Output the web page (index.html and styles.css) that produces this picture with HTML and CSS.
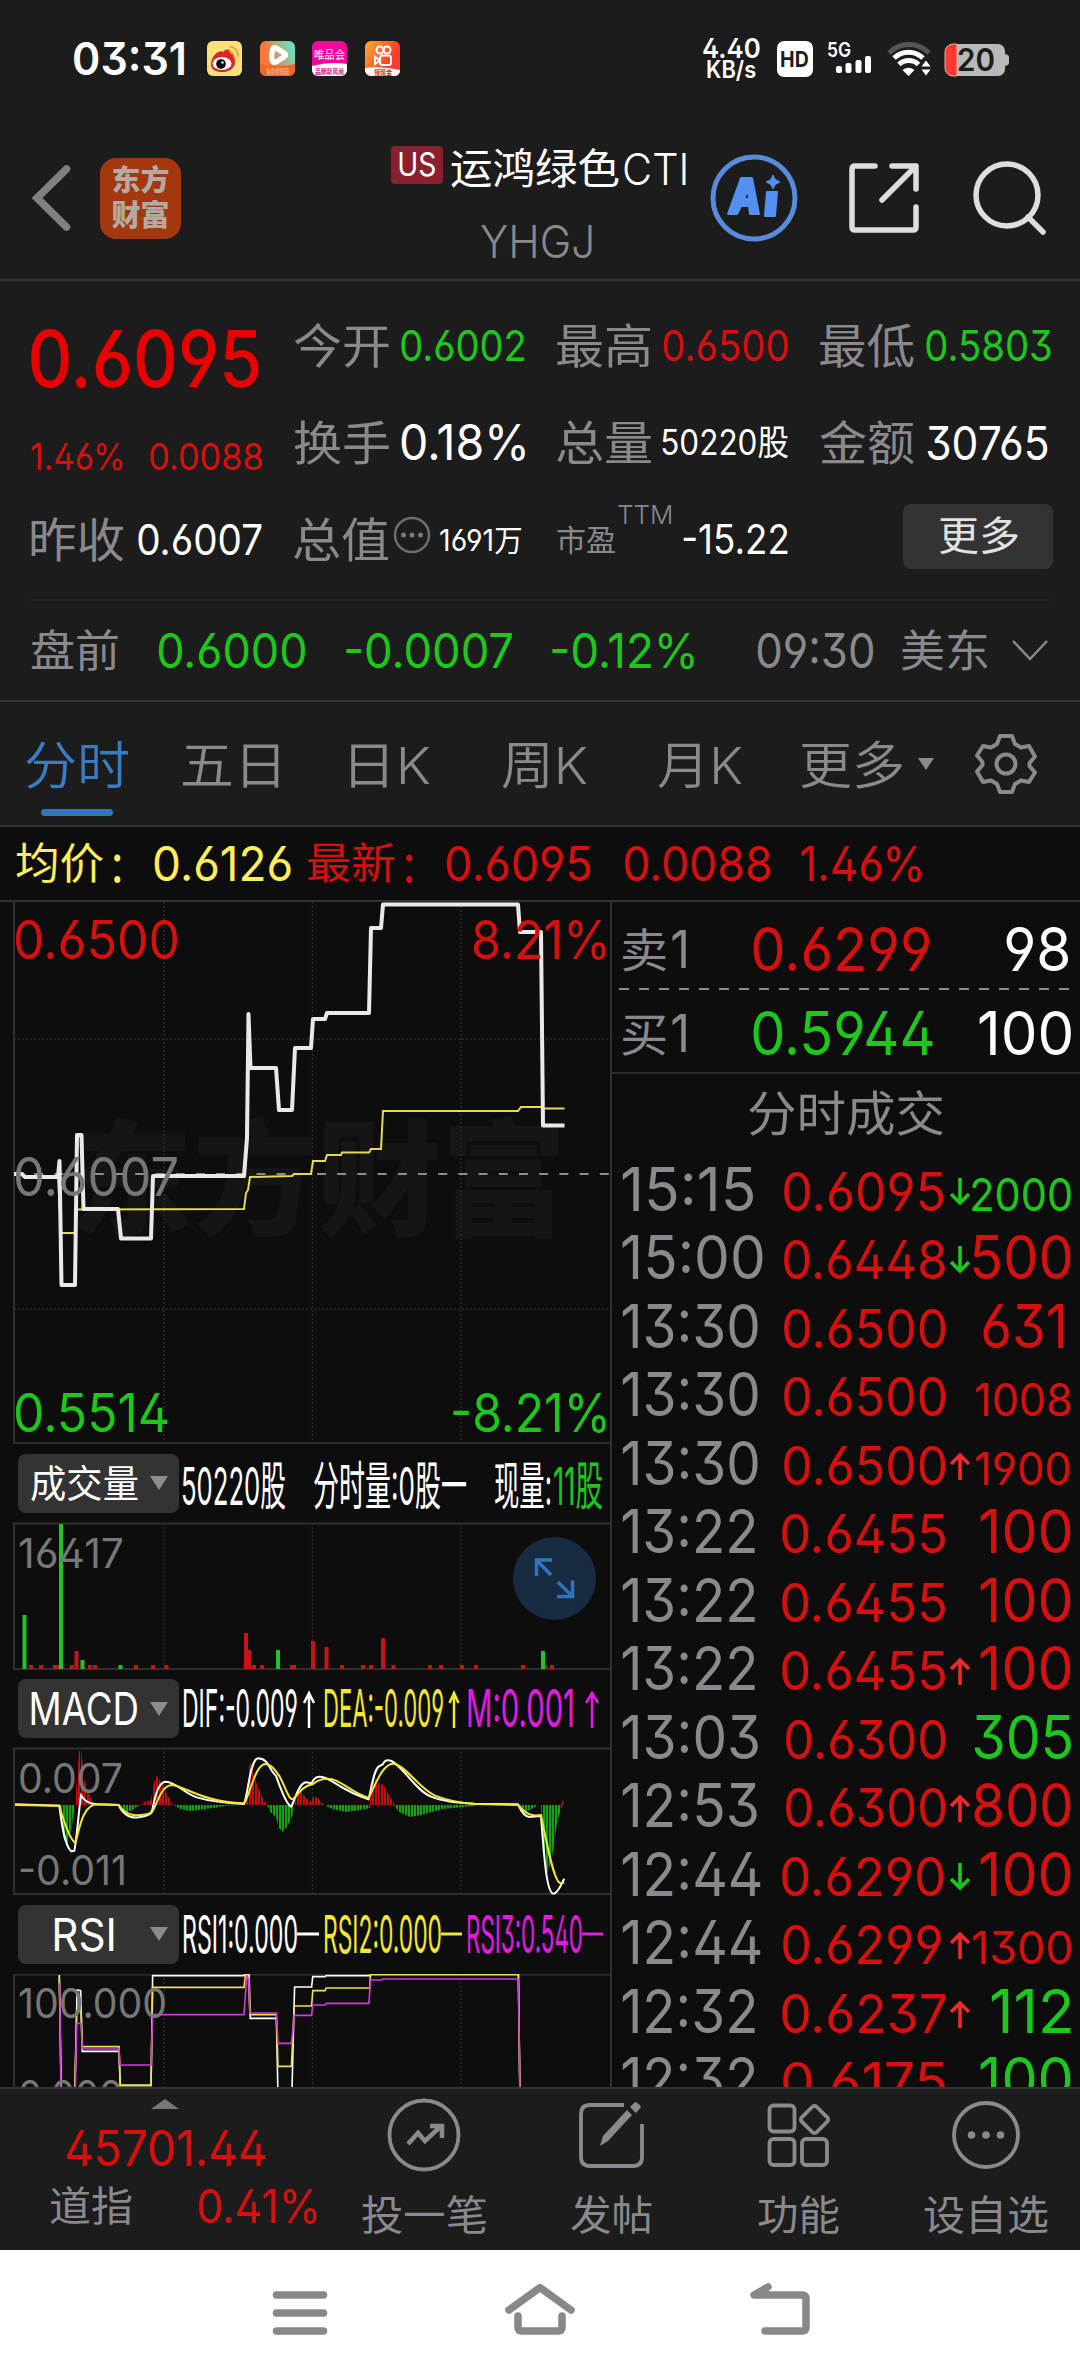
FILE: index.html
```html
<!DOCTYPE html>
<html lang="zh-CN">
<head>
<meta charset="utf-8">
<title>运鸿绿色CTI YHGJ</title>
<link rel="stylesheet" href="styles.css">
</head>
<body>
<svg class="defs"><symbol id="dn" viewBox="0 0 20 28"><path d="M10 0v25M1 16l9 9 9-9" fill="none" stroke="currentColor" stroke-width="3.600"/></symbol><symbol id="upa" viewBox="0 0 20 28"><path d="M10 28V3M1 12l9-9 9 9" fill="none" stroke="currentColor" stroke-width="3.600"/></symbol></svg>
<div class="phone">
  <header class="status">
    <span class="clock fit" data-w="110">03:31</span>
    <div class="apps">
      <svg class="app" viewBox="0 0 35 35"><rect width="35" height="35" rx="6" fill="#fddf7c"/><path d="M4 24C4 14 13 8 16 11c3-4 9-3 8 2 5 1 3 5 4 7 1 14-24 14-24 4z" fill="#e0242b"/><ellipse cx="15" cy="22.500" rx="9.500" ry="6.500" fill="#fff"/><circle cx="14" cy="23" r="4.800" fill="#000"/><circle cx="15.500" cy="21.500" r="1.300" fill="#fff"/><path d="M22 10a6 6 0 0 1 5 7M23 5.500a9 9 0 0 1 8 10" fill="none" stroke="#e8a72c" stroke-width="1.800"/></svg>
      <svg class="app" viewBox="0 0 35 35"><defs><linearGradient id="ga" x1="0" y1=".6" x2="1" y2=".2"><stop offset=".3" stop-color="#f47b3c"/><stop offset=".9" stop-color="#6fdcc0"/></linearGradient></defs><rect width="35" height="35" rx="6" fill="url(#ga)"/><path d="M0 23q18 4 35 0v6a6 6 0 0 1-6 6H6a6 6 0 0 1-6-6z" fill="#f4652a"/><path d="M13 8q0-2 3-1l8 5q3 2 0 4l-8 5q-3 1-4-2-1-5 1-11z" fill="none" stroke="#fff" stroke-width="5.500" stroke-linejoin="round"/><text class="mini" x="6" y="33" textLength="23" fill="#ffc9a5">免费看短剧</text></svg>
      <svg class="app" viewBox="0 0 35 35"><rect width="35" height="35" rx="6" fill="#f10a9a"/><path d="M0 25q18-5 35-2v6a6 6 0 0 1-6 6H6a6 6 0 0 1-6-6z" fill="#fff"/><text class="vip" x="2" y="18" textLength="31">唯品会</text><text class="mini strong" x="3" y="32.500" textLength="29" fill="#e5118f">品牌新风尚</text></svg>
      <svg class="app" viewBox="0 0 35 35"><defs><linearGradient id="gb" x1="0" y1="0" x2="1" y2=".6"><stop offset="0" stop-color="#fdb02c"/><stop offset=".8" stop-color="#fb3b2e"/></linearGradient></defs><rect width="35" height="35" rx="6" fill="url(#gb)"/><path d="M0 27q18-2 35 2 0 6-6 6H6a6 6 0 0 1-6-6z" fill="#fff"/><g fill="none" stroke="#fff" stroke-width="2"><circle cx="15" cy="9" r="3.500"/><circle cx="22" cy="9" r="3.500"/><rect x="15" y="14.500" width="11" height="9.500" rx="2.500"/><path d="M10 16v7l5-3.500z"/></g><text class="mini strong" x="9" y="34" textLength="18" fill="#d8241b">领现金</text></svg>
    </div>
    <div class="speed"><span class="fit" data-w="57">4.40</span><span class="fit unit" data-w="49">KB/s</span></div>
    <div class="hd"><span class="fit" data-w="27">HD</span></div>
    <svg class="sig" viewBox="0 0 46 36"><text class="g5" x="0" y="16" textLength="24" lengthAdjust="spacingAndGlyphs">5G</text><g fill="#fff"><rect x="9" y="25" width="6" height="7" rx="2"/><rect x="18.500" y="22" width="6" height="10" rx="2"/><rect x="28.500" y="19" width="6" height="13" rx="2"/><rect x="38" y="15" width="6" height="17" rx="2"/></g></svg>
    <svg class="wifi" viewBox="0 0 44 36"><g fill="none" stroke-width="5"><path d="M2 12a28 28 0 0 1 40 0" stroke="#555"/><path d="M7 17a21 21 0 0 1 29 0M12 23.500a14 14 0 0 1 19.500 0" stroke="#fff"/></g><path d="M15.500 29q6-4.500 12 0l-6 6z" fill="#fff"/><path d="M34.500 25.500l4.500-6 4.500 6zM34.500 28.500l4.500 6 4.500-6z" fill="#fff"/></svg>
    <svg class="battery" viewBox="0 0 66 34"><path d="M9 1h45a7 7 0 0 1 7 7v3q4 1 4 3v6q0 2-4 3v3a7 7 0 0 1-7 7H9z" fill="#b9b9b9"/><path d="M13 1v32H9a8 8 0 0 1-8-8V9a8 8 0 0 1 8-8z" fill="#fb3a2d" stroke="#d8b0ac" stroke-width="1"/><text class="pct" x="13" y="28" textLength="38" lengthAdjust="spacingAndGlyphs">20</text></svg>
  </header>

  <nav class="top">
    <svg class="back" viewBox="0 0 38 66"><path d="M34.500 4L5 33l29.500 29" fill="none" stroke="#808080" stroke-width="7.500" stroke-linecap="round"/></svg>
    <div class="logo"><span>东方</span><span>财富</span></div>
    <div class="title">
      <div class="name"><span class="us"><span class="fit" data-w="36">US</span></span><span class="fit cn" data-w="168">运鸿绿色</span><span class="fit lat" data-w="62">CTI</span></div>
      <span class="fit code" data-w="111">YHGJ</span>
    </div>
    <svg class="ai" viewBox="0 0 88 90"><circle cx="44" cy="45" r="41" fill="none" stroke="#588bdc" stroke-width="5"/><g fill="#5490f2" stroke="#5490f2" stroke-width="2" stroke-linejoin="round"><path fill-rule="evenodd" d="M31 25h11l7 36h-9l-1-8h-8l-4 8h-9zM38 36l-4 10h5z"/><path d="M57 39h10l-2 24h-10z"/><path d="M63 23q1 5 6 6-5 1-6 6-1-5-6-6 5-1 6-6z"/></g></svg>
    <svg class="share" viewBox="0 0 70 70"><path d="M26 3H6Q3 3 3 6v58q0 3 3 3h58q3 0 3-3V44M43 3h24v23M67 3L33 37" fill="none" stroke="#dedede" stroke-width="5.500" stroke-linecap="round" stroke-linejoin="round"/></svg>
    <svg class="search" viewBox="0 0 74 76"><circle cx="35" cy="35" r="31" fill="none" stroke="#dedede" stroke-width="5.500"/><path d="M56 57l15 15" stroke="#dedede" stroke-width="5.500" stroke-linecap="round"/></svg>
  </nav>

  <section class="quote">
    <div class="cell low up big"><span class="fit" data-w="231">0.6095</span></div>
    <div class="cell"><span class="lb fit" data-w="95">今开</span><span class="fit n42 down" data-w="124">0.6002</span></div>
    <div class="cell"><span class="lb fit" data-w="94">最高</span><span class="fit n42 up" data-w="125">0.6500</span></div>
    <div class="cell"><span class="lb fit" data-w="94">最低</span><span class="fit n42 down" data-w="125">0.5803</span></div>
    <div class="cell low up"><span class="fit n37" data-w="94">1.46%</span><span class="fit n37" data-w="112">0.0088</span></div>
    <div class="cell"><span class="lb fit" data-w="95">换手</span><span class="fit n49" data-w="124">0.18%</span></div>
    <div class="cell"><span class="lb fit" data-w="94">总量</span><span class="fit n35" data-w="126">50220股</span></div>
    <div class="cell"><span class="lb fit" data-w="94">金额</span><span class="fit n47" data-w="124">30765</span></div>
    <div class="cell"><span class="lb fit" data-w="93">昨收</span><span class="fit n42" data-w="124">0.6007</span></div>
    <div class="cell"><span class="lb fit" data-w="95">总值</span><svg class="dots" viewBox="0 0 38 38"><circle cx="19" cy="19" r="17" fill="none" stroke="#6d6d6f" stroke-width="2.500"/><g fill="#7a7a7c"><circle cx="10.500" cy="19" r="2.500"/><circle cx="19" cy="19" r="2.500"/><circle cx="27.500" cy="19" r="2.500"/></g></svg><span class="fit n30" data-w="85">1691万</span></div>
    <div class="cell"><span class="lb sm fit" data-w="58">市盈</span><span class="fit ttm" data-w="53">TTM</span><span class="fit n41 last" data-w="105">-15.22</span></div>
    <div class="cell end"><span class="more"><span class="fit" data-w="79">更多</span></span></div>
  </section>

  <section class="pre">
    <span class="fit t44" data-w="87">盘前</span><span class="fit v down" data-w="148">0.6000</span><span class="fit v down" data-w="166">-0.0007</span><span class="fit v down" data-w="142">-0.12%</span><span class="fit v tm" data-w="118">09:30</span><span class="fit t44" data-w="87">美东</span>
    <svg class="chev" viewBox="0 0 36 22"><path d="M1 1l17 18L35 1" fill="none" stroke="#8a898e" stroke-width="2.500"/></svg>
  </section>

  <nav class="tabs">
    <span class="tab on"><span class="fit" data-w="102">分时</span></span>
    <span class="tab"><span class="fit" data-w="97">五日</span></span>
    <span class="tab"><span class="fit" data-w="79">日K</span></span>
    <span class="tab"><span class="fit" data-w="85">周K</span></span>
    <span class="tab"><span class="fit" data-w="84">月K</span></span>
    <span class="tab"><span class="fit" data-w="102">更多</span></span>
    <svg class="tri" viewBox="0 0 16 14"><path d="M0 1h16L8 13z" fill="#8a898e"/></svg>
    <svg class="gear" viewBox="0 0 62 62"><g fill="none" stroke="#8a898e" stroke-width="4" stroke-linejoin="round"><path d="M25 3h12l3 8 6 3.500 8-1.500 6 10.500-5.500 6.500v3l5.500 6.500L54 49l-8-1.500-6 3.500-3 8H25l-3-8-6-3.500L8 49 2 38.500 7.500 32v-3L2 22.500 8 13l8 1.500 6-3.500z"/><circle cx="31" cy="31" r="9.500"/></g></svg>
  </nav>

  <section class="info">
    <span class="fit i43 yel" data-w="87">均价</span><span class="fit i43 c1 yel" data-w="7">:</span><span class="fit i48 yel" data-w="139">0.6126</span>
    <span class="fit i43 up a" data-w="87">最新</span><span class="fit i43 c1 up" data-w="7">:</span><span class="fit i48 up" data-w="147">0.6095</span><span class="fit i48 up b" data-w="146">0.0088</span><span class="fit i48 up b" data-w="123">1.46%</span>
  </section>

  <main class="board">
    <div class="charts">
      <svg class="price" viewBox="0 902 612 542">
        <g class="wm"><text x="68" y="1226" textLength="498">东方财富</text></g>
        <path class="grid" d="M164 902v542M312.500 902v542M461 902v542M14 1039h597M14 1309h597"/>
        <path class="edge" d="M14 902v541h597"/>
        <path d="M14 1174h597" stroke="#8d8d8d" stroke-width="2" stroke-dasharray="9 11.200" fill="none"/>
        <path class="avg" d="M14 1174H22L25 1177H58L61 1233H75L77 1209.500L244 1209L246 1193L248 1190L250 1177L292 1176L294 1174H311L313 1161H325L327 1155H341L342 1152.500H369L371 1149H381L383 1111H518L521 1107H541L543 1108.500H564.500"/>
        <path class="now" d="M14 1174H22L25 1177H58L59.500 1161L61.500 1285H75L77 1135H81.500L83.500 1209H118L121 1238.500H151L153 1176H244L247 1138L248.500 1014L250.500 1068H276L279 1110H292L295 1048H311L313 1019H325L327 1013H369L371 928H381L383 904.500H518L520 932H541L543 1125.500H564.500"/>
        <g class="axis"><text class="up" x="13" y="959" textLength="167">0.6500</text><text class="up" x="471" y="959" textLength="140">8.21%</text><text class="gray" x="13" y="1196" textLength="166">0.6007</text><text class="down" x="13" y="1432" textLength="157">0.5514</text><text class="down" x="450" y="1432" textLength="161">-8.21%</text></g>
      </svg>

      <div class="ind"><span class="chip"><span class="fit" data-w="107">成交量</span><i></i></span>
        <svg class="legend" viewBox="182 1444 430 79"><text x="181" y="1505" textLength="105">50220股</text><text x="313" y="1505" textLength="154">分时量:0股一</text><text x="494" y="1505" textLength="58">现量:</text><text class="down" x="553" y="1505" textLength="50">11股</text></svg></div>
      <svg class="vol" viewBox="0 1523 612 147">
        <path class="grid" d="M164 1523v146M312.500 1523v146M461 1523v146"/>
        <path class="edge" d="M611 1523.500H14v145.500h597"/>
        <g stroke-width="4" fill="none"><path stroke="#c81414" d="M31 1669v-4M41 1669v-4M55 1669v-4M59 1669v-4M72 1669v-4M76.500 1669v-18M90 1669v-4M95 1669v-4M136 1669v-4M153 1669v-4M166.500 1669v-4M246 1669v-36M249 1669v-19M254 1669v-4M262 1669v-4M292 1669v-4M294 1669v-4M313 1669v-28M326.500 1669v-22M342 1669v-4M363 1669v-4M371 1669v-4M383 1669v-31M393.500 1669v-4M430 1669v-4M441 1669v-4M462 1669v-4M476 1669v-4M523 1669v-4M545 1669v-4M552 1669v-4"/><path stroke="#22c322" d="M24.500 1669v-54M61 1669v-145M82.500 1669v-9M120.500 1669v-4M278 1669v-19M543 1669v-18"/></g>
        <g class="sub"><text x="18" y="1568" textLength="106">16417</text></g>
        <circle cx="554.500" cy="1578.500" r="41.500" fill="#172b42"/>
        <path d="M552 1560H536.500V1576M537 1560.500L551 1575M557 1596.500H572.500V1580.500M572 1596L558 1582" fill="none" stroke="#2f74bd" stroke-width="3.500"/>
      </svg>

      <div class="ind"><span class="chip"><span class="fit en" data-w="106">MACD</span><i></i></span>
        <svg class="legend" viewBox="182 1669 430 79"><text x="182" y="1727" textLength="116">DIF:-0.009</text><text class="yel2" x="323" y="1727" textLength="121">DEA:-0.009</text><text class="mag" x="466" y="1727" textLength="109">M:0.001</text><g fill="none" stroke-width="2.500"><path stroke="#fff" d="M309 1728v-35M304 1703l5-10 5 10"/><path stroke="#f4e72e" d="M454 1728v-35M449.500 1703l4.500-10 4.500 10"/><path stroke="#e41ae4" d="M592 1728v-35M586 1703l6-10 6 10"/></g></svg></div>
      <svg class="vol" viewBox="0 1748 612 147">
        <defs><pattern id="sr" width="3" height="8" patternUnits="userSpaceOnUse"><path d="M1 0v8" stroke="#c80c0c" stroke-width="2"/></pattern><pattern id="sg" width="3" height="8" patternUnits="userSpaceOnUse"><path d="M1 0v8" stroke="#0fa50f" stroke-width="2.200"/></pattern></defs>
        <path class="grid" d="M164 1748v146M312.500 1748v146M461 1748v146"/>
        <path class="edge" d="M611 1748.500H14v145.500h597"/>
        <path fill="url(#sr)" d="M76 1805v-15l3-38 2-4 3 31 4 13 5 10 2 3zM141 1805l3-3 7-2 3-18 3-6 4 6 7 14 5 9zM246 1805l2-25 2-18 3 11 6 17 5 11 3 4zM294 1805l3-10 3-5 6 8 4 4 4-6 4 2 6 7zM370 1805v-20l4-8 6 8 3-1 6 11 6 10zM561 1805l3-9v9z"/>
        <path fill="url(#sg)" d="M60 1805l3 32 4 8 4-15 4-25zM120 1805l6 8 6-3 8-5zM174 1805l6 4 10 2 16-2 20-3 15-1zM267 1805l4 8 5 4 3 11 3 4 5-5 5-10 2-12zM325 1805l7 4 14 3 14-2 10-2v-3zM394 1805l5 7 11 5 11-2 22-6 32-3v-1zM519 1805l5 7 6-2 8-5zM541 1805l4 58 3 10 4-16 5-34 5-18z"/>
        <g transform="translate(0 1730) scale(.39541 .33333)" fill="none" stroke-width="2"><path class="ln" stroke="#fff" d="M38 223L150 227C155 270 162 345 180 364L188 362C195 320 200 230 205 196C215 215 225 221 245 223L300 225C310 250 325 266 350 262C370 258 382 255 385 240C392 200 400 155 420 155C445 156 465 190 500 203C540 217 580 220 617 222C628 190 632 90 652 85C680 85 680 120 698 137C708 170 722 220 736 230C745 215 755 157 775 157L788 160C795 140 805 138 815 141C840 146 860 180 932 208C940 175 945 115 960 108L968 103C972 92 980 88 990 93C1020 110 1050 180 1090 200C1120 215 1160 218 1200 221L1310 223C1322 255 1335 264 1345 260L1368 258C1375 350 1380 490 1400 491C1412 490 1420 460 1427 446"/><path class="ln" stroke="#f4e72e" d="M38 225L150 227C158 260 175 325 190 338C198 325 203 225 245 223L300 225C320 258 345 262 382 250C395 235 405 165 435 165C470 170 510 215 617 220C630 205 645 100 672 102C690 103 697 125 705 135C720 165 730 210 740 208C755 195 760 170 790 163C810 145 830 142 850 152C880 170 905 195 932 203C945 180 965 100 995 101C1025 105 1060 175 1100 197C1140 215 1170 220 1200 222L1310 225C1325 245 1340 262 1368 255C1380 320 1400 460 1418 460L1427 458"/></g>
        <g class="sub"><text x="18" y="1792.500" textLength="105">0.007</text><text x="18" y="1884.500" textLength="109">-0.011</text></g>
      </svg>

      <div class="ind"><span class="chip"><span class="fit en rs" data-w="60">RSI</span><i></i></span>
        <svg class="legend" viewBox="182 1895 430 79"><text x="182" y="1953" textLength="116">RSI1:0.000</text><text class="yel2" x="323" y="1953" textLength="119">RSI2:0.000</text><text class="mag" x="466" y="1953" textLength="117">RSI3:0.540</text><g fill="none" stroke-width="3"><path stroke="#fff" d="M297 1934h22"/><path stroke="#f4e72e" d="M441 1934h21"/><path stroke="#e41ae4" d="M582 1934h21"/></g></svg></div>
      <svg class="rsi" viewBox="0 1974 612 113">
        <path class="grid" d="M164 1974v113M312.500 1974v113M461 1974v113"/>
        <path class="edge" d="M611 1974.500H14v120"/>
        <g transform="translate(0 1730) scale(.39541 .33333)" fill="none" stroke-width="1.600"><path class="ln" stroke="#fff" d="M150 735L155 1100M189 1100L195 780L204 782L208 964H301L304 1066H382L386 737H617L620 733H630L633 865H699L703 1100M738 1100L745 771H788L791 740H822L825 737H935L937 733H1311L1315 1100"/><path class="ln" stroke="#f0e04a" d="M150 740L155 1100M189 1100L194 845L205 842L208 950H301L304 1066H382L386 772H617L621 733H628L632 854H699L703 1009H737L744 828H788L791 782H822L825 774H935L937 733.500H1311L1315 1100"/><path class="ln" stroke="#d23bd2" d="M151 760L154 1100M190 1100L194 880H205L208 957H301L304 1005H382L386 854H617L624 740L629 745L632 849H699L703 940H737L744 856H788L791 825H822L825 820H933L937 750H965L968 747H1311L1315 1100"/></g>
        <g class="sub"><text x="18" y="2018" textLength="149">100.000</text><text x="18" y="2109.500" textLength="105">0.000</text></g>
      </svg>
    </div>

    <aside class="book">
      <div class="lvl"><span class="side"><span class="fit s46" data-w="44">卖</span><span class="fit s50" data-w="14">1</span></span><span class="fit n61 up pr" data-w="182">0.6299</span><span class="fit n61" data-w="65">98</span></div>
      <svg class="dash" viewBox="0 0 452 2"><path d="M0 1h452" stroke="#8d8d8d" stroke-width="2" stroke-dasharray="10 10"/></svg>
      <div class="lvl"><span class="side"><span class="fit s46" data-w="44">买</span><span class="fit s50" data-w="14">1</span></span><span class="fit n61 down pr" data-w="184">0.5944</span><span class="fit n61" data-w="92">100</span></div>
      <div class="cap"><span class="fit" data-w="194">分时成交</span></div>
      <div class="ticks">
        <div class="tk"><span class="fit t" data-w="131">15:15</span><span class="fit p up" data-w="162">0.6095</span><svg class="ar down"><use href="#dn"/></svg><span class="q"><span class="fit s down" data-w="99">2000</span></span></div>
        <div class="tk"><span class="fit t" data-w="141">15:00</span><span class="fit p up" data-w="162">0.6448</span><svg class="ar down"><use href="#dn"/></svg><span class="q"><span class="fit up" data-w="98">500</span></span></div>
        <div class="tk"><span class="fit t" data-w="136">13:30</span><span class="fit p up" data-w="162">0.6500</span><i class="ar"></i><span class="q in"><span class="fit up" data-w="83">631</span></span></div>
        <div class="tk"><span class="fit t" data-w="136">13:30</span><span class="fit p up" data-w="162">0.6500</span><i class="ar"></i><span class="q"><span class="fit s up" data-w="95">1008</span></span></div>
        <div class="tk"><span class="fit t" data-w="136">13:30</span><span class="fit p up" data-w="162">0.6500</span><svg class="ar rise"><use href="#upa"/></svg><span class="q"><span class="fit s up" data-w="95">1900</span></span></div>
        <div class="tk"><span class="fit t" data-w="133">13:22</span><span class="fit p up" data-w="164">0.6455</span><i class="ar"></i><span class="q"><span class="fit up" data-w="91">100</span></span></div>
        <div class="tk"><span class="fit t" data-w="133">13:22</span><span class="fit p up" data-w="164">0.6455</span><i class="ar"></i><span class="q"><span class="fit up" data-w="91">100</span></span></div>
        <div class="tk"><span class="fit t" data-w="133">13:22</span><span class="fit p up" data-w="164">0.6455</span><svg class="ar rise"><use href="#upa"/></svg><span class="q"><span class="fit up" data-w="91">100</span></span></div>
        <div class="tk"><span class="fit t" data-w="136">13:03</span><span class="fit p up" data-w="160">0.6300</span><i class="ar"></i><span class="q"><span class="fit down" data-w="97">305</span></span></div>
        <div class="tk"><span class="fit t" data-w="135">12:53</span><span class="fit p up" data-w="160">0.6300</span><svg class="ar rise"><use href="#upa"/></svg><span class="q"><span class="fit up" data-w="97">800</span></span></div>
        <div class="tk"><span class="fit t" data-w="139">12:44</span><span class="fit p up" data-w="164">0.6290</span><svg class="ar down"><use href="#dn"/></svg><span class="q"><span class="fit up" data-w="91">100</span></span></div>
        <div class="tk"><span class="fit t" data-w="139">12:44</span><span class="fit p up" data-w="163">0.6299</span><svg class="ar rise"><use href="#upa"/></svg><span class="q"><span class="fit s up" data-w="98">1300</span></span></div>
        <div class="tk"><span class="fit t" data-w="133">12:32</span><span class="fit p up" data-w="164">0.6237</span><svg class="ar rise"><use href="#upa"/></svg><span class="q"><span class="fit down" data-w="80">112</span></span></div>
        <div class="tk"><span class="fit t" data-w="133">12:32</span><span class="fit p up" data-w="163">0.6175</span><i class="ar"></i><span class="q"><span class="fit down" data-w="91">100</span></span></div>
      </div>
    </aside>
  </main>

  <footer class="dock">
    <div class="index">
      <svg class="peak" viewBox="0 0 28 10"><path d="M14 0l14 10H0z" fill="#77767b"/></svg>
      <span class="fit idx up" data-w="199">45701.44</span>
      <div class="dj"><span class="fit lab" data-w="82">道指</span><span class="fit pc up" data-w="118">0.41%</span></div>
    </div>
    <div class="act a1"><svg viewBox="0 0 76 76"><circle cx="38" cy="38" r="34.500" class="o"/><path d="M22 47l10-11 7 8 16-15M44 29h12v12" fill="none" stroke="#8a898e" stroke-width="4.500"/></svg><span class="fit lab" data-w="124">投一笔</span></div>
    <div class="act a2"><svg viewBox="0 0 76 76"><path class="o" d="M51 8H17Q8 8 8 17v43q0 9 9 9h43q9 0 9-9V27"/><path d="M28 48l3-10 24-26 5 5-24 26zM58 9l5-5q4 1 6 5l-5 6z" transform="translate(-1 1)" fill="#8a898e"/></svg><span class="fit lab" data-w="81">发帖</span></div>
    <div class="act a3"><svg viewBox="0 0 76 76"><g class="o"><rect x="8.500" y="8.500" width="25" height="26" rx="4"/><rect x="8.500" y="42" width="25" height="26" rx="4"/><rect x="41" y="42" width="25" height="26" rx="4"/><rect x="-10.500" y="-10.500" width="21" height="21" rx="3" transform="translate(53.500 22.500) rotate(45)"/></g></svg><span class="fit lab" data-w="81">功能</span></div>
    <div class="act a4"><svg viewBox="0 0 76 76"><circle cx="38" cy="38" r="32" class="o"/><g fill="#8a898e"><circle cx="23.500" cy="38" r="3.800"/><circle cx="38" cy="38" r="3.800"/><circle cx="52.500" cy="38" r="3.800"/></g></svg><span class="fit lab" data-w="124">设自选</span></div>
  </footer>

  <nav class="sys">
    <svg viewBox="0 0 64 56"><path d="M8.500 9h47M8.500 27h47M8.500 45h47"/></svg>
    <svg viewBox="0 0 72 56"><path d="M5 24L35.500 2Q36 1.500 36.500 2L67 24M14 30v11q0 4 4 4h36q4 0 4-4V30"/></svg>
    <svg viewBox="0 0 64 56"><path d="M20 1L6 9h48q4 0 4 4v28q0 4-4 4H17"/></svg>
  </nav>
</div>
<script src="fit.js"></script>
</body>
</html>
```
FILE: styles.css
```css
* { box-sizing: border-box; }
body { margin: 0; background: #1c1c1c; }
.phone {
  width: 1080px; height: 2376px; overflow: hidden; display: flex; flex-direction: column;
  background: #1c1c1c; color: #fff;
  font-family: Inter, "Noto Sans CJK SC", sans-serif; font-feature-settings: "ss01"; line-height: 1;
}
svg { display: block; flex: none; overflow: visible; }
.defs { position: absolute; top: 0; left: 0; width: 0; height: 0; }
.fit { display: block; flex: none; white-space: nowrap; transform-origin: 0 50%; }
.up { color: #d80f0f; fill: #d80f0f; }
.down { color: #1bc81b; fill: #1bc81b; }
.yel { color: #ffee58; }
.yel2 { fill: #f4e72e; }
.mag { fill: #e41ae4; }
.gray { fill: #777; }

.status { height: 117px; display: flex; align-items: center; padding-left: 74px; flex: none; }
.clock { font-size: 45px; font-weight: 600; }
.apps { display: flex; gap: 17.500px; margin-left: 23px; }
.app { width: 35px; height: 35px; }
.mini { font-size: 6.500px; }
.strong { font-weight: 700; }
.vip { font-size: 11px; fill: #fff; }
.speed { width: 60px; margin-left: 302px; font-size: 27px; font-weight: 600; display: flex; flex-direction: column; align-items: center; line-height: 21px; }
.unit { font-size: 24px; }
.hd { width: 36px; height: 36px; margin-left: 15px; border-radius: 7px; background: #fff; color: #1c1c1c; display: flex; align-items: center; justify-content: center; font-size: 22px; font-weight: 700; }
.sig { width: 46px; height: 36px; margin-left: 14px; }
.g5 { font-size: 20px; font-weight: 600; fill: #fff; }
.wifi { width: 44px; height: 36px; margin-left: 14px; }
.battery { width: 66px; height: 34px; margin: 2px 0 0 13px; }
.pct { font-size: 31px; font-weight: 600; fill: #1c1c1c; }

.top { height: 164px; flex: none; display: flex; align-items: center; padding-left: 32px; border-bottom: 2px solid #363636; }
.back { width: 38px; height: 66px; }
.logo { width: 81px; height: 81px; margin-left: 30px; border-radius: 16px; background: #a3370e; color: #b3aaa4; display: flex; flex-direction: column; align-items: center; justify-content: center; font-size: 29px; font-weight: 800; line-height: 35px; }
.title { width: 296px; margin: 15px 0 0 210px; display: flex; flex-direction: column; gap: 28px; }
.name { display: flex; align-items: center; height: 44px; }
.us { width: 52px; height: 38px; margin: -8px 8px 0 0; border-radius: 4px; background: #8a1f30; display: flex; align-items: center; justify-content: center; font-size: 32px; }
.cn { font-size: 42px; }
.lat { font-size: 44px; font-weight: 350; margin-left: 5px; }
.code { font-size: 45px; font-weight: 350; color: #8a898e; margin-left: 90px; }
.ai { width: 88px; height: 90px; margin-left: 23px; }
.share { width: 70px; height: 70px; margin-left: 51px; }
.search { width: 74px; height: 76px; margin-left: 53px; }

.quote { height: 320px; flex: none; margin: 0 29px; padding: 16px 0 0 2px; display: grid; grid-template-columns: repeat(4, 231px); grid-auto-rows: 97px; column-gap: 32px; border-bottom: 2px solid #222; }
.cell { display: flex; align-items: center; justify-content: space-between; }
.low { padding-top: 27px; }
.big { font-size: 78px; font-weight: 500; color: #ea0000; }
.lb { font-size: 47px; color: #8a898e; }
.sm { font-size: 30px; }
.n30 { font-size: 30px; } .n35 { font-size: 35px; } .n37 { font-size: 37px; }
.n41 { font-size: 41px; } .n42 { font-size: 42px; } .n47 { font-size: 47px; } .n49 { font-size: 49px; }
.dots { width: 38px; height: 38px; margin: -10px 0 0 -6px; }
.ttm { font-size: 26px; color: #8a898e; font-weight: 350; margin: 0 10px 50px 0; }
.end { justify-content: flex-end; }
.more { width: 150px; height: 65px; margin: -7px -2px 0 0; border-radius: 8px; background: #333; color: #e2e2e2; font-size: 40px; display: flex; align-items: center; justify-content: center; }

.pre { height: 101px; flex: none; display: flex; align-items: center; padding-left: 31px; border-bottom: 2px solid #363636; }
.v { font-size: 48px; margin-left: 40px; }
.tm { color: #8a898e; margin: 0 26px 0 63px; }
.t44 { font-size: 44px; color: #8a898e; }
.chev { width: 36px; height: 22px; margin-left: 24px; }

.tabs { height: 125px; flex: none; display: flex; align-items: center; padding-left: 26px; border-bottom: 2px solid #363636; font-size: 51px; font-weight: 350; color: #8a898e; }
.tab { height: 123px; display: flex; align-items: center; padding-top: 4px; margin-right: 54px; position: relative; }
.tab:nth-child(2), .tab:nth-child(3) { margin-right: 72px; }
.tab:nth-child(4) { margin-right: 71px; }
.tab:nth-child(5) { margin-right: 59px; }
.tab:nth-child(6) { margin-right: 15px; }
.on { color: #3b7cc4; }
.on::after { content: ""; position: absolute; left: 15px; top: 107px; width: 72px; height: 7px; border-radius: 3.500px; background: #3375bc; }
.gear { width: 62px; height: 62px; margin-left: 41px; }
.tri { width: 16px; height: 14px; }

.info { height: 75px; flex: none; display: flex; align-items: center; padding-left: 16px; background: #0d0d0d; border-bottom: 2px solid #333; }
.i43 { font-size: 43px; }
.i48 { font-size: 48px; }
.c1 { margin: 0 33px 0 11px; font-size: 54px; }
.a { margin-left: 15px; }
.b { margin-left: 31px; }

.board { height: 1185px; flex: none; display: grid; grid-template-columns: 612px 468px; background: #0d0d0d; overflow: hidden; }
.charts { border-right: 2px solid #303030; }
.charts > svg { width: 612px; }
.price { height: 542px; overflow: hidden; }
.vol { height: 147px; }
.rsi { height: 113px; overflow: hidden; }
.grid { fill: none; stroke: #2a2a2a; stroke-width: 1.500; stroke-dasharray: 2 2; }
.edge { fill: none; stroke: #2f2f2f; stroke-width: 2; }
.avg { fill: none; stroke: #e6da50; stroke-width: 2; }
.now { fill: none; stroke: #e9e9e9; stroke-width: 4; stroke-linejoin: round; }
.ln { vector-effect: non-scaling-stroke; }
.wm { font-size: 126px; font-weight: 900; fill: #151515; }
.axis { font-size: 53px; }
.sub { font-size: 41px; fill: #777; }
.ind { height: 78.500px; display: flex; align-items: center; padding-left: 18px; }
.chip { flex: none; width: 161px; height: 59px; border-radius: 8px; background: #333; display: flex; align-items: center; padding: 0 11px 0 13px; font-size: 38px; }
.chip i { width: 0; border: 9px solid transparent; border-top: 14px solid #8b8b91; border-bottom: 0; margin-left: auto; }
.chip .en { font-size: 45px; }
.chip .rs { margin-left: 23px; }
.legend { width: 430px; height: 79px; margin-left: 3px; font-size: 52px; fill: #fff; }

.book { padding-top: 10px; }
.lvl { height: 68px; display: flex; align-items: center; padding: 4px 9px 0 10px; margin-top: 1.500px; }
.side { display: flex; align-items: center; gap: 6px; width: 66px; color: #8a898e; }
.s46 { font-size: 46px; } .s50 { font-size: 52px; }
.n61 { font-size: 61px; }
.pr { margin: 0 auto 0 65px; }
.dash { width: 452px; height: 2px; margin: 6px 0 8px 7px; }
.cap { display: flex; justify-content: center; align-items: center; height: 83px; margin-top: 6px; border-top: 2px solid #2a2a2a; font-size: 48px; color: #8a898e; }
.tk { height: 68.500px; display: flex; align-items: baseline; line-height: 68.500px; padding-left: 10px; }
.t { font-size: 60px; color: #8a898e; }
.p { font-size: 54px; margin-left: auto; }
.ar { width: 20px; height: 28px; margin-left: 4px; position: relative; top: -5px; }
.rise { color: #ee2a2a; }
.q { width: 101px; margin-right: 9px; display: flex; justify-content: flex-end; align-items: baseline; font-size: 60px; }
.in { padding-right: 5px; }
.s { font-size: 45px; }

.dock { height: 163px; flex: none; display: flex; background: #1c1c1c; border-top: 2px solid #333; }
.index { width: 330px; display: flex; flex-direction: column; align-items: center; padding-top: 10px; }
.peak { width: 28px; height: 10px; }
.idx { font-size: 49px; margin-top: 15px; }
.dj { width: 330px; display: flex; align-items: center; justify-content: space-between; padding: 0 14px 0 50px; margin-top: 10px; }
.pc { font-size: 46px; }
.lab { font-size: 41px; color: #8a898e; }
.act { width: 188px; display: flex; flex-direction: column; align-items: center; gap: 22px; padding-top: 8px; }
.act svg { width: 76px; height: 76px; }
.o { fill: none; stroke: #8a898e; stroke-width: 3.800; }
.sys { height: 126px; flex: none; background: #fff; display: flex; justify-content: center; gap: 172px; padding-top: 36px; }
.sys svg { height: 56px; width: 64px; fill: none; stroke: #888; stroke-width: 7.500; stroke-linecap: round; stroke-linejoin: round; }
.sys svg:nth-child(2) { width: 72px; }
```
FILE: fit.js
```js
// Fits each figure to its column: the glyphs' ink is scaled to data-w pixels wide.
const pen = document.createElement('canvas').getContext('2d');
document.querySelectorAll('.fit').forEach((el) => {
  const cs = getComputedStyle(el);
  pen.font = `${cs.fontWeight} ${cs.fontSize} ${cs.fontFamily}`;
  const m = pen.measureText(el.textContent);
  const w = +el.dataset.w;
  const k = w / (m.actualBoundingBoxRight + m.actualBoundingBoxLeft);
  el.style.width = w + 'px';
  el.style.transform = `translateX(${m.actualBoundingBoxLeft * k}px) scaleX(${k})`;
});
// Chart captions are condensed glyph by glyph rather than by spacing.
document.querySelectorAll('text[textLength]').forEach((t) => t.setAttribute('lengthAdjust', 'spacingAndGlyphs'));
```
